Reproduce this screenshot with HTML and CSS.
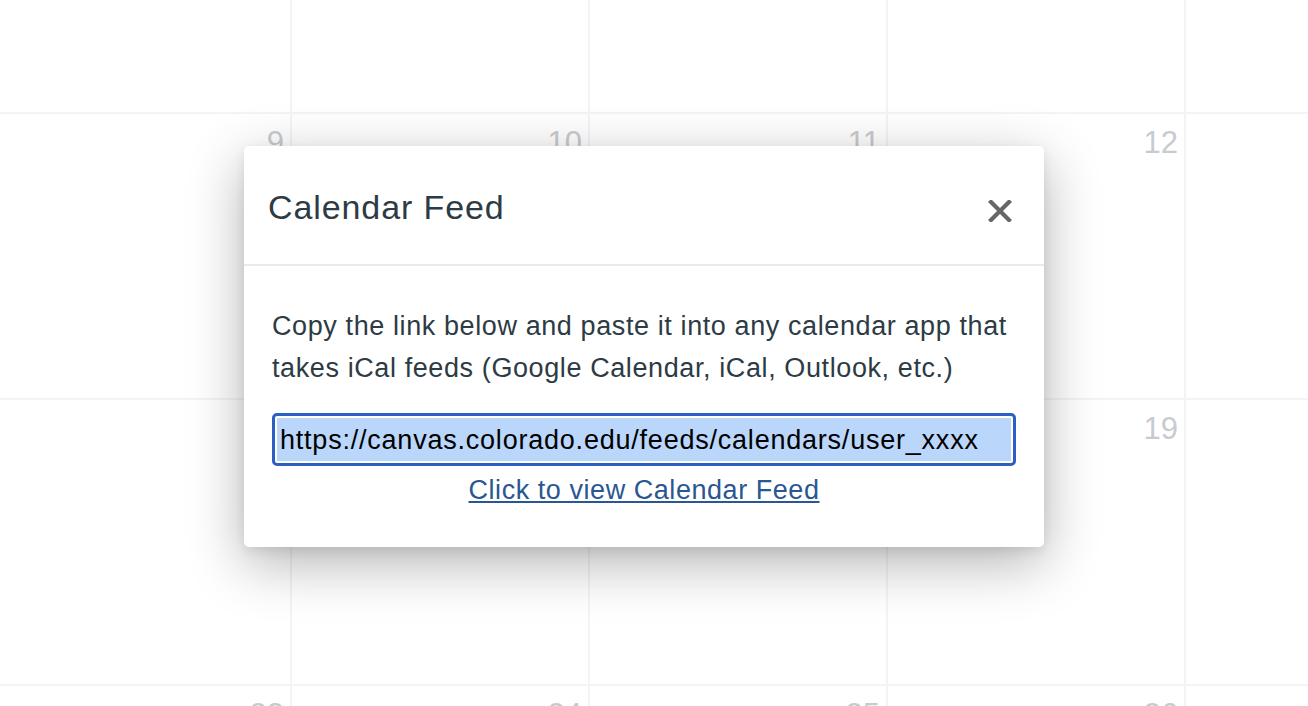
FILE: index.html
```html
<!DOCTYPE html>
<html lang="en">
<head>
<meta charset="utf-8">
<title>Calendar Feed</title>
<link rel="stylesheet" href="styles.css">
</head>
<body>
<div class="viewport">
  <div class="calendar">
    <div class="cell"><span class="day">2</span></div>
    <div class="cell"><span class="day">3</span></div>
    <div class="cell"><span class="day">4</span></div>
    <div class="cell"><span class="day">5</span></div>
    <div class="cell"><span class="day">6</span></div>
    <div class="cell"><span class="day">9</span></div>
    <div class="cell"><span class="day">10</span></div>
    <div class="cell"><span class="day">11</span></div>
    <div class="cell"><span class="day">12</span></div>
    <div class="cell"><span class="day">13</span></div>
    <div class="cell"><span class="day">16</span></div>
    <div class="cell"><span class="day">17</span></div>
    <div class="cell"><span class="day">18</span></div>
    <div class="cell"><span class="day">19</span></div>
    <div class="cell"><span class="day">20</span></div>
    <div class="cell"><span class="day">23</span></div>
    <div class="cell"><span class="day">24</span></div>
    <div class="cell"><span class="day">25</span></div>
    <div class="cell"><span class="day">26</span></div>
    <div class="cell"><span class="day">27</span></div>
  </div>

  <div class="dialog" role="dialog" aria-label="Calendar Feed">
    <div class="dialog-header">
      <h2 class="dialog-title">Calendar Feed</h2>
      <button class="close" aria-label="Close">
        <svg width="24" height="22" viewBox="0 0 24 22" aria-hidden="true">
          <path d="M3 2 L21 20 M21 2 L3 20" stroke="#666" stroke-width="4.2" stroke-linecap="square" fill="none"/>
        </svg>
      </button>
    </div>
    <div class="dialog-body">
      <p class="intro">Copy the link below and paste it into any calendar app that takes iCal feeds (Google Calendar, iCal, Outlook, etc.)</p>
      <div class="feed-input"><span class="feed-value">https://canvas.colorado.edu/feeds/calendars/user_xxxx</span></div>
      <div class="link-row"><a class="feed-link" href="#">Click to view Calendar Feed</a></div>
    </div>
  </div>
</div>
</body>
</html>
```

FILE: styles.css
```css
html, body {
  margin: 0;
  padding: 0;
  background: #ffffff;
}

body {
  font-family: "Liberation Sans", Arial, sans-serif;
}

.viewport {
  position: relative;
  width: 1308px;
  height: 706px;
  overflow: hidden;
}

.calendar {
  display: grid;
  grid-template-columns: repeat(5, 298px);
  grid-auto-rows: 286px;
  margin-left: -6px;
  margin-top: -172px;
}

.cell {
  border-right: 2px solid #f3f4f5;
  border-bottom: 2px solid #f3f4f5;
  display: flex;
  justify-content: flex-end;
  align-items: flex-start;
  padding: 11px 6px 0 0;
}

.day {
  font-size: 31px;
  line-height: 36px;
  color: #c7cbcf;
}

.dialog {
  position: absolute;
  left: 244px;
  top: 146px;
  width: 800px;
  background: #ffffff;
  border-radius: 5px;
  box-shadow: 0 16px 56px rgba(0, 0, 0, 0.30), 0 4px 12px rgba(0, 0, 0, 0.08);
}

.dialog-header {
  height: 118px;
  border-bottom: 2px solid #e8eaec;
  display: flex;
  align-items: center;
  justify-content: space-between;
  padding: 0 32px 0 24px;
}

.dialog-title {
  margin: 4px 0 0 0;
  font-weight: normal;
  font-size: 34px;
  letter-spacing: 0.9px;
  line-height: 40px;
  color: #2d3b45;
}

.close {
  border: 0;
  background: transparent;
  padding: 0;
  margin-top: 12px;
  width: 24px;
  height: 22px;
  display: flex;
}

.dialog-body {
  padding: 39px 28px 42px 28px;
}

.intro {
  margin: 0;
  font-size: 27px;
  letter-spacing: 0.6px;
  line-height: 42px;
  color: #2d3b45;
}

.feed-input {
  margin-top: 24px;
  border: 3px solid #2c5fc2;
  border-radius: 5px;
  padding: 2px;
  height: 43px;
  box-sizing: content-box;
}

.feed-value {
  display: block;
  height: 43px;
  line-height: 44px;
  background: #bad6fb;
  color: #000000;
  font-size: 27px;
  letter-spacing: 0.78px;
  padding-left: 3px;
  white-space: nowrap;
  overflow: hidden;
}

.link-row {
  text-align: center;
  margin-top: 9px;
  font-size: 27px;
  line-height: 30px;
}

.feed-link {
  font-size: 27px;
  letter-spacing: 0.55px;
  color: #2a5791;
  text-decoration: underline;
}
```
